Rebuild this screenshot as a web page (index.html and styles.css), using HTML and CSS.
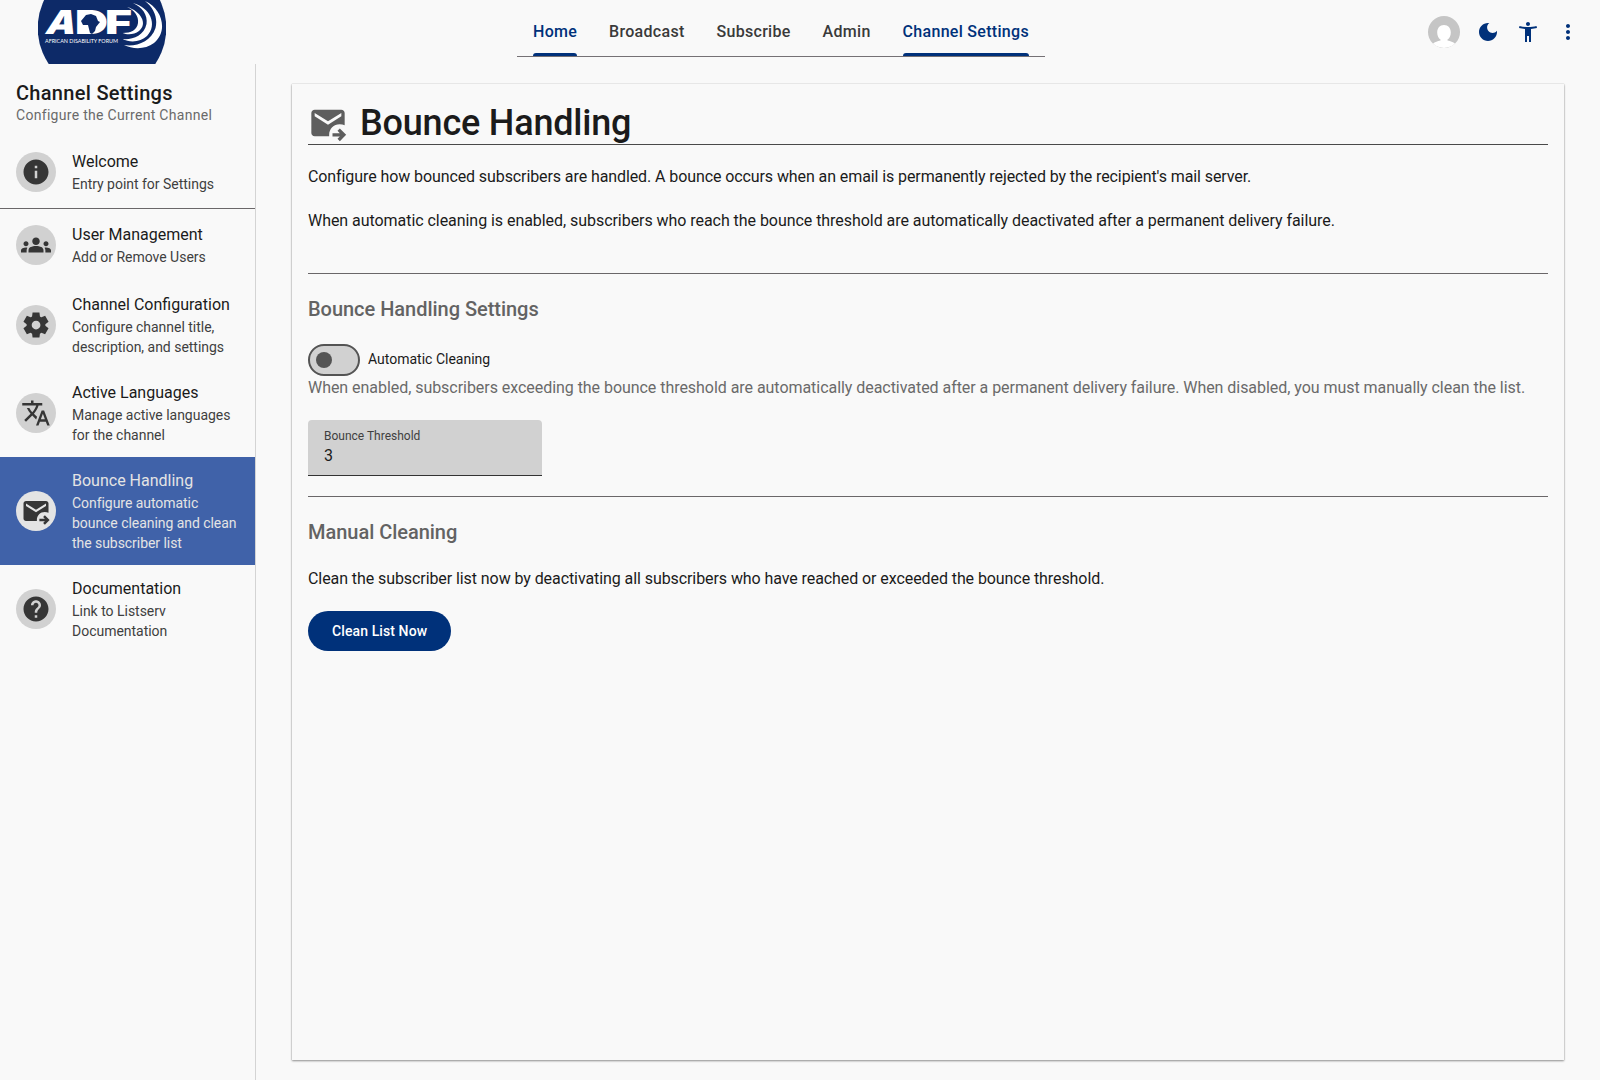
FILE: index.html
```html
<!DOCTYPE html>
<html lang="en">
<head>
    <meta charset="UTF-8">
    <meta name="viewport" content="width=device-width, initial-scale=1.0">
    <title>Bounce Handling</title>
    <link rel="stylesheet" href="styles.css">
</head>
<body>
    <svg class="defs" width="0" height="0">
        <symbol id="bounce" viewBox="0 0 24 24">
            <path d="M4 4h16c1.1 0 2 .9 2 2v7.3c-.9-.4-1.9-.6-3-.6-3.6 0-6.3 2.8-6.3 6.3v1H4c-1.1 0-2-.9-2-2V6c0-1.1.9-2 2-2zm8 7L4 6v2l8 5 8-5V6z"/>
            <path d="M19.1 22.9l-1.4-1.4 1.4-1.4h-4.4v-2h4.4l-1.4-1.4 1.4-1.4 3.8 3.8z"/>
        </symbol>
    </svg>

    <header class="header">
        <svg class="logo" width="128" height="64" viewBox="0 0 128 64">
            <circle cx="64" cy="28" r="64.3" fill="#0d2a68"/>
            <g fill="#fff" font-family="Inter, sans-serif">
                <text transform="translate(6 34) skewX(-16)" font-size="33" font-weight="900" textLength="30" lengthAdjust="spacingAndGlyphs">A</text>
                <text x="37" y="34" font-size="33" font-weight="900" textLength="33" lengthAdjust="spacingAndGlyphs">D</text>
                <text x="67" y="34" font-size="33" font-weight="900" textLength="27" lengthAdjust="spacingAndGlyphs">F</text>
                <text x="7" y="42.8" font-family="Lato, sans-serif" font-size="5.6" textLength="73" lengthAdjust="spacingAndGlyphs">AFRICAN DISABILITY FORUM</text>
            </g>
            <path fill="#fff" d="M43 12h14q5 3 4 14l-8 7H43z"/>
            <path fill="#0d2a68" d="M48 15l5-1 5 2 2 5 2 1-4 5-1 4-3 3-2-1-2-8-5 0-2-4z"/>
            <path fill="#fff" d="M89 7C103 11 110 24 101 31 96 35 89 35 84.7 33 93 33 99 30 100 23 101 16 96 10 89 7z"/>
            <path fill="#fff" d="M95 3.3C112 7 120 25 109 36 103 42 92 43 84.7 39 94 40 106 36 108.5 24 110 15 104 7 95 3.3z"/>
            <path fill="#fff" d="M107 1C125 9 130 32 116 43 107 50 94 49 86 45 98 47 113 42 117.5 28 120 18 116 8 107 1z"/>
        </svg>
        <nav class="tabs">
            <a class="tab active">Home</a>
            <a class="tab">Broadcast</a>
            <a class="tab">Subscribe</a>
            <a class="tab">Admin</a>
            <a class="tab active">Channel Settings</a>
        </nav>
        <div class="actions">
            <svg class="avatar" viewBox="0 0 32 32">
                <circle cx="16" cy="16" r="16" fill="#c5c5c5"/>
                <path fill="#fff" d="M16 9c4.2 0 6.8 3.2 6.8 7.4 0 3.1-1.3 5.8-3.3 7.1v1c3 .5 5.6 1.600 7.500 3A16 16 0 0 1 5 27.500c1.900-1.400 4.500-2.500 7.500-3v-1c-2-1.300-3.300-4-3.300-7.100C9.200 12.200 11.800 9 16 9z"/>
            </svg>
            <svg class="action" viewBox="0 0 24 24"><path d="M12 3c-4.970 0-9 4.030-9 9s4.030 9 9 9 9-4.030 9-9c0-.46-.04-.92-.1-1.360-.98 1.370-2.580 2.260-4.400 2.260-2.980 0-5.400-2.420-5.400-5.400 0-1.810.89-3.420 2.260-4.400-.44-.06-.9-.1-1.360-.1z"/></svg>
            <svg class="action" viewBox="0 0 24 24"><path d="M20.500 6c-2.610.7-5.670 1-8.500 1s-5.890-.3-8.500-1L3 8c1.860.5 4 .83 6 1v13h2v-6h2v6h2V9c2-.17 4.140-.5 6-1l-.5-2zM12 6c1.100 0 2-.9 2-2s-.9-2-2-2-2 .9-2 2 .9 2 2 2z"/></svg>
            <svg class="action" viewBox="0 0 24 24"><path d="M12 8c1.100 0 2-.9 2-2s-.9-2-2-2-2 .9-2 2 .9 2 2 2zm0 2c-1.100 0-2 .9-2 2s.9 2 2 2 2-.9 2-2-.9-2-2-2zm0 6c-1.100 0-2 .9-2 2s.9 2 2 2 2-.9 2-2-.9-2-2-2z"/></svg>
        </div>
    </header>

    <div class="layout">
        <aside class="sidebar">
            <div class="sidebar-head">
                <h2 class="sidebar-title">Channel Settings</h2>
                <p class="sidebar-subtitle">Configure the Current Channel</p>
            </div>
            <a class="item">
                <span class="item-icon"><svg viewBox="0 0 24 24"><path d="M12 2C6.480 2 2 6.480 2 12s4.480 10 10 10 10-4.480 10-10S17.520 2 12 2zm1 15h-2v-6h2v6zm0-8h-2V7h2v2z"/></svg></span>
                <span class="item-text"><b>Welcome</b><small>Entry point for Settings</small></span>
            </a>
            <hr class="item-divider">
            <a class="item">
                <span class="item-icon"><svg viewBox="0 0 24 24"><path d="M12 12.750c1.630 0 3.070.39 4.240.9 1.080.48 1.760 1.560 1.760 2.730V18H6v-1.610c0-1.180.68-2.260 1.760-2.730 1.170-.52 2.610-.91 4.240-.91zM4 13c1.100 0 2-.9 2-2s-.9-2-2-2-2 .9-2 2 .9 2 2 2zm1.130 1.100C4.760 14.040 4.390 14 4 14c-.99 0-1.930.21-2.780.58C.48 14.900 0 15.620 0 16.430V18h4.500v-1.610c0-.83.23-1.610.63-2.290zM20 13c1.100 0 2-.9 2-2s-.9-2-2-2-2 .9-2 2 .9 2 2 2zm4 3.430c0-.81-.48-1.530-1.220-1.850-.85-.37-1.790-.58-2.780-.58-.39 0-.76.04-1.130.1.4.68.63 1.460.63 2.290V18H24v-1.570zM12 6c1.660 0 3 1.340 3 3s-1.340 3-3 3-3-1.340-3-3 1.340-3 3-3z"/></svg></span>
                <span class="item-text"><b>User Management</b><small>Add or Remove Users</small></span>
            </a>
            <a class="item">
                <span class="item-icon"><svg viewBox="0 0 24 24"><path d="M9.250 22l-.4-3.200q-.33-.13-.61-.3t-.56-.38L4.700 19.380 1.950 14.630l2.580-1.950q-.03-.18-.03-.34v-.67q0-.17.03-.35L1.950 9.380 4.700 4.630l2.980 1.250q.27-.2.57-.38t.6-.3l.4-3.200h5.500l.4 3.200q.33.13.61.3t.56.38l2.980-1.250 2.750 4.750-2.580 1.950q.03.18.03.34v.67q0 .17-.05.35l2.580 1.950-2.750 4.750-2.950-1.270q-.27.2-.57.38t-.6.3l-.4 3.200zm2.800-6.500q1.450 0 2.480-1.020T15.550 12t-1.020-2.470T12.050 8.500q-1.470 0-2.490 1.030T8.550 12t1.010 2.480 2.490 1.020z"/></svg></span>
                <span class="item-text"><b>Channel Configuration</b><small>Configure channel title, description, and settings</small></span>
            </a>
            <a class="item">
                <span class="item-icon"><svg viewBox="0 0 24 24"><path d="M12.870 15.070l-2.540-2.510.03-.03c1.740-1.940 2.980-4.170 3.710-6.530H17V4h-7V2H8v2H1v1.990h11.170C11.500 7.920 10.440 9.750 9 11.350 8.070 10.320 7.300 9.190 6.690 8h-2c.73 1.630 1.730 3.170 2.980 4.560l-5.090 5.020L4 19l5-5 3.110 3.110.76-2.040zM18.500 10h-2L12 22h2l1.120-3h4.750L21 22h2l-4.500-12zm-2.620 7l1.620-4.330L19.120 17h-3.240z"/></svg></span>
                <span class="item-text"><b>Active Languages</b><small>Manage active languages for the channel</small></span>
            </a>
            <a class="item selected">
                <span class="item-icon"><svg viewBox="0 0 24 24"><use href="#bounce"/></svg></span>
                <span class="item-text"><b>Bounce Handling</b><small>Configure automatic bounce cleaning and clean the subscriber list</small></span>
            </a>
            <a class="item">
                <span class="item-icon"><svg viewBox="0 0 24 24"><path d="M12 2C6.480 2 2 6.480 2 12s4.480 10 10 10 10-4.480 10-10S17.520 2 12 2zm1 17h-2v-2h2v2zm2.070-7.750l-.9.92C13.450 12.900 13 13.500 13 15h-2v-.5c0-1.100.45-2.100 1.170-2.830l1.240-1.260c.37-.36.59-.86.59-1.410 0-1.100-.9-2-2-2s-2 .9-2 2H8c0-2.210 1.790-4 4-4s4 1.790 4 4c0 .88-.36 1.680-.93 2.250z"/></svg></span>
                <span class="item-text"><b>Documentation</b><small>Link to Listserv Documentation</small></span>
            </a>
        </aside>

        <main class="main">
            <section class="card">
                <h1 class="page-title">
                    <svg viewBox="0 0 24 24"><use href="#bounce"/></svg>
                    Bounce Handling
                </h1>
                <p class="intro lead">Configure how bounced subscribers are handled. A bounce occurs when an email is permanently rejected by the recipient's mail server.</p>
                <p class="intro">When automatic cleaning is enabled, subscribers who reach the bounce threshold are automatically deactivated after a permanent delivery failure.</p>
                <hr class="divider first">
                <h3 class="section-title">Bounce Handling Settings</h3>
                <label class="toggle"><span class="switch"></span><span class="toggle-label">Automatic Cleaning</span></label>
                <p class="hint">When enabled, subscribers exceeding the bounce threshold are automatically deactivated after a permanent delivery failure. When disabled, you must manually clean the list.</p>
                <label class="field">
                    <span class="field-label">Bounce Threshold</span>
                    <input class="field-input" type="text" value="3">
                </label>
                <hr class="divider">
                <h3 class="section-title">Manual Cleaning</h3>
                <p class="manual">Clean the subscriber list now by deactivating all subscribers who have reached or exceeded the bounce threshold.</p>
                <button class="btn">Clean List Now</button>
            </section>
        </main>
    </div>
</body>
</html>
```
FILE: styles.css
```css
* {
    box-sizing: border-box;
}
body {
    display: flex;
    flex-direction: column;
    height: 100vh;
    margin: 0;
    background-color: #f9f9f9;
    color: #1b1b1b;
    font-family: Roboto, sans-serif;
    font-size: 16px;
    line-height: 24px;
}
h1, h2, h3, p {
    margin: 0;
    font-weight: 500;
}
p {
    font-weight: 400;
}
hr {
    border: none;
    height: 1px;
    margin: 0;
    background: #6a6769;
}
.defs {
    position: absolute;
}
.header {
    display: grid;
    grid-template-columns: 517px 528px 1fr;
    height: 64px;
    flex: none;
}
.logo {
    display: block;
    margin-left: 38px;
}
.tabs {
    display: flex;
    height: 57px;
    border-bottom: 1px solid #757175;
    padding: 0 16px;
    justify-content: space-between;
}
.tab {
    display: flex;
    align-items: center;
    padding-top: 10px;
    border-bottom: 3px solid transparent;
    font-weight: 500;
    letter-spacing: 0.3px;
    color: #3a3a3a;
    white-space: nowrap;
    position: relative;
}
.tab.active {
    color: #00317a;
}
.tab.active::after {
    content: "";
    position: absolute;
    left: 0;
    right: 0;
    bottom: -3px;
    height: 3px;
    border-radius: 3px 3px 0 0;
    background: #00317a;
}
.actions {
    display: flex;
    align-items: center;
    justify-content: flex-end;
    gap: 16px;
    padding-right: 20px;
}
.avatar {
    width: 32px;
    height: 32px;
}
.action {
    width: 24px;
    height: 24px;
    fill: #00317a;
}
.layout {
    display: flex;
    flex: 1;
    min-height: 0;
}
.sidebar {
    width: 256px;
    flex: none;
    border-right: 1px solid #d4d4d4;
}
.sidebar-head {
    height: 72px;
    padding: 17px 16px 0;
}
.sidebar-title {
    font-size: 20px;
    letter-spacing: 0.3px;
}
.sidebar-subtitle {
    font-size: 14px;
    line-height: 20px;
    letter-spacing: 0.3px;
    color: #6a6a6a;
}
.item {
    display: flex;
    align-items: center;
    gap: 16px;
    min-height: 72px;
    padding: 12px 16px;
}
.item-icon {
    display: flex;
    align-items: center;
    justify-content: center;
    width: 40px;
    height: 40px;
    flex: none;
    border-radius: 50%;
    background: #d1d1d1;
}
.item-icon svg {
    width: 30px;
    height: 30px;
    fill: #363636;
}
.item-text b,
.item-text small {
    display: block;
    font-weight: 400;
}
.item-text small {
    font-size: 14px;
    line-height: 20px;
    letter-spacing: -0.02px;
    color: #3f3f3f;
}
.item.selected {
    background: #4062a9;
    color: #e4e4e4;
}
.item.selected small {
    color: #e4e4e4;
    letter-spacing: -0.05px;
}
.item.selected .item-icon {
    background: #e4e4e4;
}
.main {
    flex: 1;
    padding: 20px 36px;
}
.card {
    height: 976px;
    padding: 16px;
    box-shadow: 0 1px 2px rgba(0, 0, 0, 0.4), 0 0 1px rgba(0, 0, 0, 0.25);
}
.page-title {
    display: flex;
    align-items: center;
    gap: 12px;
    height: 45px;
    padding-top: 2px;
    border-bottom: 1px solid #4a4a4a;
    font-size: 36px;
    line-height: 42px;
    letter-spacing: -0.2px;
}
.page-title svg {
    width: 40px;
    height: 40px;
    fill: #5e5e5e;
}
.intro {
    margin-top: 20px;
    letter-spacing: -0.05px;
}
.intro.lead {
    letter-spacing: -0.093px;
}
.divider {
    margin-top: 20px;
}
.divider.first {
    margin-top: 40px;
}
.section-title {
    margin-top: 23px;
    font-size: 20px;
    letter-spacing: -0.03px;
    color: #636363;
}
.toggle {
    display: flex;
    align-items: center;
    gap: 8px;
    height: 32px;
    margin-top: 23px;
    font-size: 14px;
}
.toggle-label {
    padding-bottom: 2px;
}
.switch {
    display: flex;
    align-items: center;
    width: 52px;
    height: 32px;
    padding-left: 6px;
    border: 2px solid #545454;
    border-radius: 16px;
    background: #d1d1d1;
}
.switch::before {
    content: "";
    width: 16px;
    height: 16px;
    border-radius: 50%;
    background: #545454;
}
.hint {
    color: #6a6a6a;
    letter-spacing: -0.045px;
}
.field {
    display: flex;
    flex-direction: column;
    width: 234px;
    height: 56px;
    margin-top: 20px;
    padding: 8px 16px 0;
    border-bottom: 1px solid #333;
    border-radius: 4px 4px 0 0;
    background: #d1d1d1;
}
.field-label {
    font-size: 12px;
    line-height: 16px;
    color: #3f3f3f;
}
.field-input {
    width: 100%;
    height: 24px;
    padding: 0;
    border: none;
    background: none;
    color: #1b1b1b;
    font: inherit;
}
.manual {
    margin-top: 23px;
    letter-spacing: -0.08px;
}
.btn {
    height: 40px;
    margin-top: 20px;
    padding: 0 24px;
    border: none;
    border-radius: 20px;
    background: #00317a;
    color: #fff;
    font: 500 14px Roboto, sans-serif;
    letter-spacing: 0.1px;
}
```
